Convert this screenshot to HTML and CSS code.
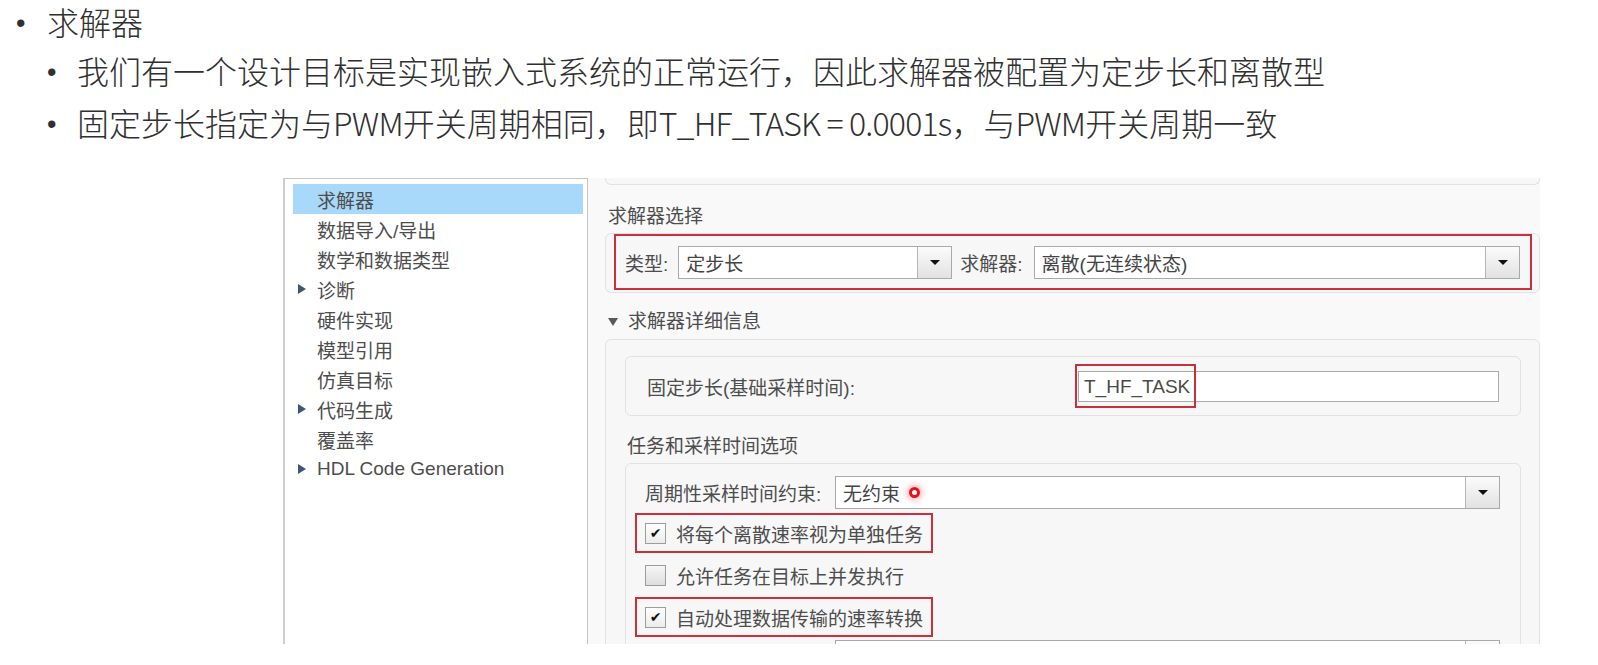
FILE: index.html
```html
<!DOCTYPE html>
<html>
<head>
    <title>求解器配置</title>
    <link rel="stylesheet" href="styles.css">
</head>
<body>
    <div class="notes">
        <p class="note lvl1">求解器</p>
        <p class="note lvl2">我们有一个设计目标是实现嵌入式系统的正常运行，因此求解器被配置为定步长和离散型</p>
        <p class="note lvl2">固定步长指定为与<span class="latin">PWM</span>开关周期相同，即<span class="latin">T_HF_TASK = 0.0001s</span>，与<span class="latin">PWM</span>开关周期一致</p>
    </div>

    <div class="shot">
        <div class="tree">
            <div class="tree-item selected"><span class="twisty"></span>求解器</div>
            <div class="tree-item"><span class="twisty"></span>数据导入/导出</div>
            <div class="tree-item"><span class="twisty"></span>数学和数据类型</div>
            <div class="tree-item"><span class="twisty closed"></span>诊断</div>
            <div class="tree-item"><span class="twisty"></span>硬件实现</div>
            <div class="tree-item"><span class="twisty"></span>模型引用</div>
            <div class="tree-item"><span class="twisty"></span>仿真目标</div>
            <div class="tree-item"><span class="twisty closed"></span>代码生成</div>
            <div class="tree-item"><span class="twisty"></span>覆盖率</div>
            <div class="tree-item"><span class="twisty closed"></span>HDL Code Generation</div>
        </div>

        <div class="pane">
            <div class="card stub"></div>

            <div class="section-title">求解器选择</div>
            <div class="card solver-card">
                <div class="solver-row mark">
                    <span class="label">类型:</span>
                    <div class="combo type-combo"><span class="value">定步长</span><span class="arrow"></span></div>
                    <span class="label solver-label">求解器:</span>
                    <div class="combo grow"><span class="value">离散(无连续状态)</span><span class="arrow"></span></div>
                </div>
            </div>

            <div class="section-title toggle">求解器详细信息</div>
            <div class="card outer">
                <div class="card inner step-card">
                    <span class="label">固定步长(基础采样时间):</span>
                    <div class="field">T_HF_TASK<span class="field-mark"></span></div>
                </div>

                <div class="section-title sub">任务和采样时间选项</div>
                <div class="card inner tasks">
                    <div class="combo-row">
                        <span class="label wide">周期性采样时间约束:</span>
                        <div class="combo grow"><span class="value">无约束<span class="click-dot"></span></span><span class="arrow"></span></div>
                    </div>
                    <div class="check-row mark"><span class="checkbox checked">✔</span>将每个离散速率视为单独任务</div>
                    <div class="check-row"><span class="checkbox"></span>允许任务在目标上并发执行</div>
                    <div class="check-row mark"><span class="checkbox checked">✔</span>自动处理数据传输的速率转换</div>
                    <div class="combo-row last">
                        <span class="label wide"></span>
                        <div class="combo grow"><span class="value"></span><span class="arrow"></span></div>
                    </div>
                </div>
            </div>
        </div>
    </div>
</body>
</html>
```

FILE: styles.css
```css
body {
    margin: 0;
    font-family: "Noto Sans CJK SC", sans-serif;
    color: #1c1c1c;
    background-color: #fff;
}

/* slide notes above the screenshot */
.note {
    margin: 0;
    font-family: "Noto Sans CJK SC Light", "Noto Sans CJK SC DemiLight", "Noto Sans CJK SC", sans-serif;
    font-size: 32px;
    font-weight: 300;
    color: #303030;
    white-space: nowrap;
}
.note::before {
    content: "•";
    display: inline-block;
    font-family: "Liberation Sans", sans-serif;
    font-size: 27px;
    line-height: 1;
    vertical-align: 3px;
}
.note .latin {
    letter-spacing: -0.8px;
}
.lvl1 {
    padding-left: 16px;
    line-height: 42px;
    margin-bottom: 2px;
}
.lvl1::before {
    width: 31px;
}
.lvl2 {
    padding-left: 47px;
    line-height: 52px;
}
.lvl2::before {
    width: 30px;
}

/* configuration dialog screenshot */
.shot {
    display: flex;
    width: 1257px;
    height: 466px;
    margin: 30px 0 0 283px;
    overflow: hidden;
    font-family: "Liberation Sans", "Noto Sans CJK SC", sans-serif;
    font-size: 19px;
    color: #4d4d4d;
}

.tree {
    width: 305px;
    flex: none;
    box-sizing: border-box;
    border: 1px solid #c4c4c4;
    border-left: 2px solid #cfcfcf;
    border-bottom: none;
    background-color: #fff;
    padding: 5px 4px 0 8px;
}
.tree-item {
    display: flex;
    align-items: center;
    height: 30px;
    white-space: nowrap;
}
.tree-item.selected {
    background-color: #a9d9fa;
}
.twisty {
    width: 24px;
    flex: none;
}
.twisty.closed::before {
    content: "";
    display: block;
    width: 0;
    margin-left: 5px;
    border-left: 8px solid #3e5874;
    border-top: 5px solid transparent;
    border-bottom: 5px solid transparent;
}

.pane {
    flex: 1;
    background-color: #f9f9f9;
    padding-left: 17px;
}
.card {
    background-color: #f7f7f7;
    border: 1px solid #e2e2e2;
    border-radius: 6px;
}
.stub {
    height: 6px;
    border-top: none;
    border-radius: 0 0 6px 6px;
}

.section-title {
    margin: 20px 0 4px 3px;
    line-height: 24px;
}
.section-title.toggle {
    display: flex;
    align-items: center;
    margin: 17px 0 5px 3px;
}
.section-title.toggle::before {
    content: "";
    width: 0;
    margin-right: 10px;
    border-top: 8px solid #5a5a5a;
    border-left: 5px solid transparent;
    border-right: 5px solid transparent;
}
.section-title.sub {
    margin: 19px 0 4px 2px;
}

.mark {
    border: 2px solid #c9303c;
}

.solver-card {
    padding: 0 7px 2px 8px;
}
.solver-row {
    display: flex;
    align-items: center;
    padding: 10px 10px 9px 9px;
}
.label {
    flex: none;
    white-space: nowrap;
}
.solver-row .label {
    margin-right: 10px;
}
.solver-row .solver-label {
    margin-left: 8px;
    margin-right: 11px;
}

.combo {
    display: flex;
    height: 33px;
    box-sizing: border-box;
    border: 1px solid #a9a9a9;
    background-color: #fff;
}
.type-combo {
    width: 274px;
    flex: none;
}
.grow {
    flex: 1;
}
.combo .value {
    flex: 1;
    display: flex;
    align-items: center;
    padding-left: 7px;
    color: #444;
}
.combo .arrow {
    width: 33px;
    flex: none;
    display: flex;
    align-items: center;
    justify-content: center;
    border-left: 1px solid #b5b5b5;
    background: linear-gradient(#fbfbfb, #e2e2e2);
}
.combo .arrow::before {
    content: "";
    border-top: 5px solid #111;
    border-left: 5px solid transparent;
    border-right: 5px solid transparent;
}

.outer {
    height: 600px;
    padding: 16px 18px 0 19px;
}
.step-card {
    display: flex;
    align-items: center;
    padding: 14px 21px 13px 21px;
}
.field {
    position: relative;
    width: 421px;
    height: 31px;
    margin-left: auto;
    box-sizing: border-box;
    border: 1px solid #aaa;
    background-color: #fff;
    padding-left: 5px;
    line-height: 29px;
    color: #4a4a4a;
}
.field-mark {
    position: absolute;
    left: -4px;
    top: -8px;
    width: 121px;
    height: 44px;
    box-sizing: border-box;
    border: 2px solid #c9303c;
}

.tasks {
    height: 400px;
    padding: 12px 20px 0 19px;
}
.combo-row {
    display: flex;
    align-items: center;
}
.label.wide {
    width: 190px;
}
.combo-row.last {
    margin-top: 3px;
}
.click-dot {
    display: inline-block;
    width: 5px;
    height: 5px;
    margin-left: 9px;
    border: 3px solid #e8101a;
    border-radius: 50%;
    box-shadow: 0 0 5px 3px rgba(255, 70, 70, 0.3);
}

.check-row {
    display: flex;
    align-items: center;
    width: fit-content;
    height: 40px;
    box-sizing: border-box;
    border: 2px solid transparent;
    margin: 2px 0 0 -10px;
    padding: 0 8px;
}
.check-row.mark {
    border-color: #c9303c;
}
.combo-row + .check-row {
    margin-top: 4px;
}
.checkbox {
    display: flex;
    align-items: center;
    justify-content: center;
    width: 21px;
    height: 21px;
    box-sizing: border-box;
    margin-right: 10px;
    border: 1px solid #9c9c9c;
    background: linear-gradient(#f6f6f6, #dedede);
    font-family: "DejaVu Sans", sans-serif;
    font-size: 14px;
    color: #111;
}
.checkbox.checked {
    background: linear-gradient(#ffffff, #ececec);
}
```
